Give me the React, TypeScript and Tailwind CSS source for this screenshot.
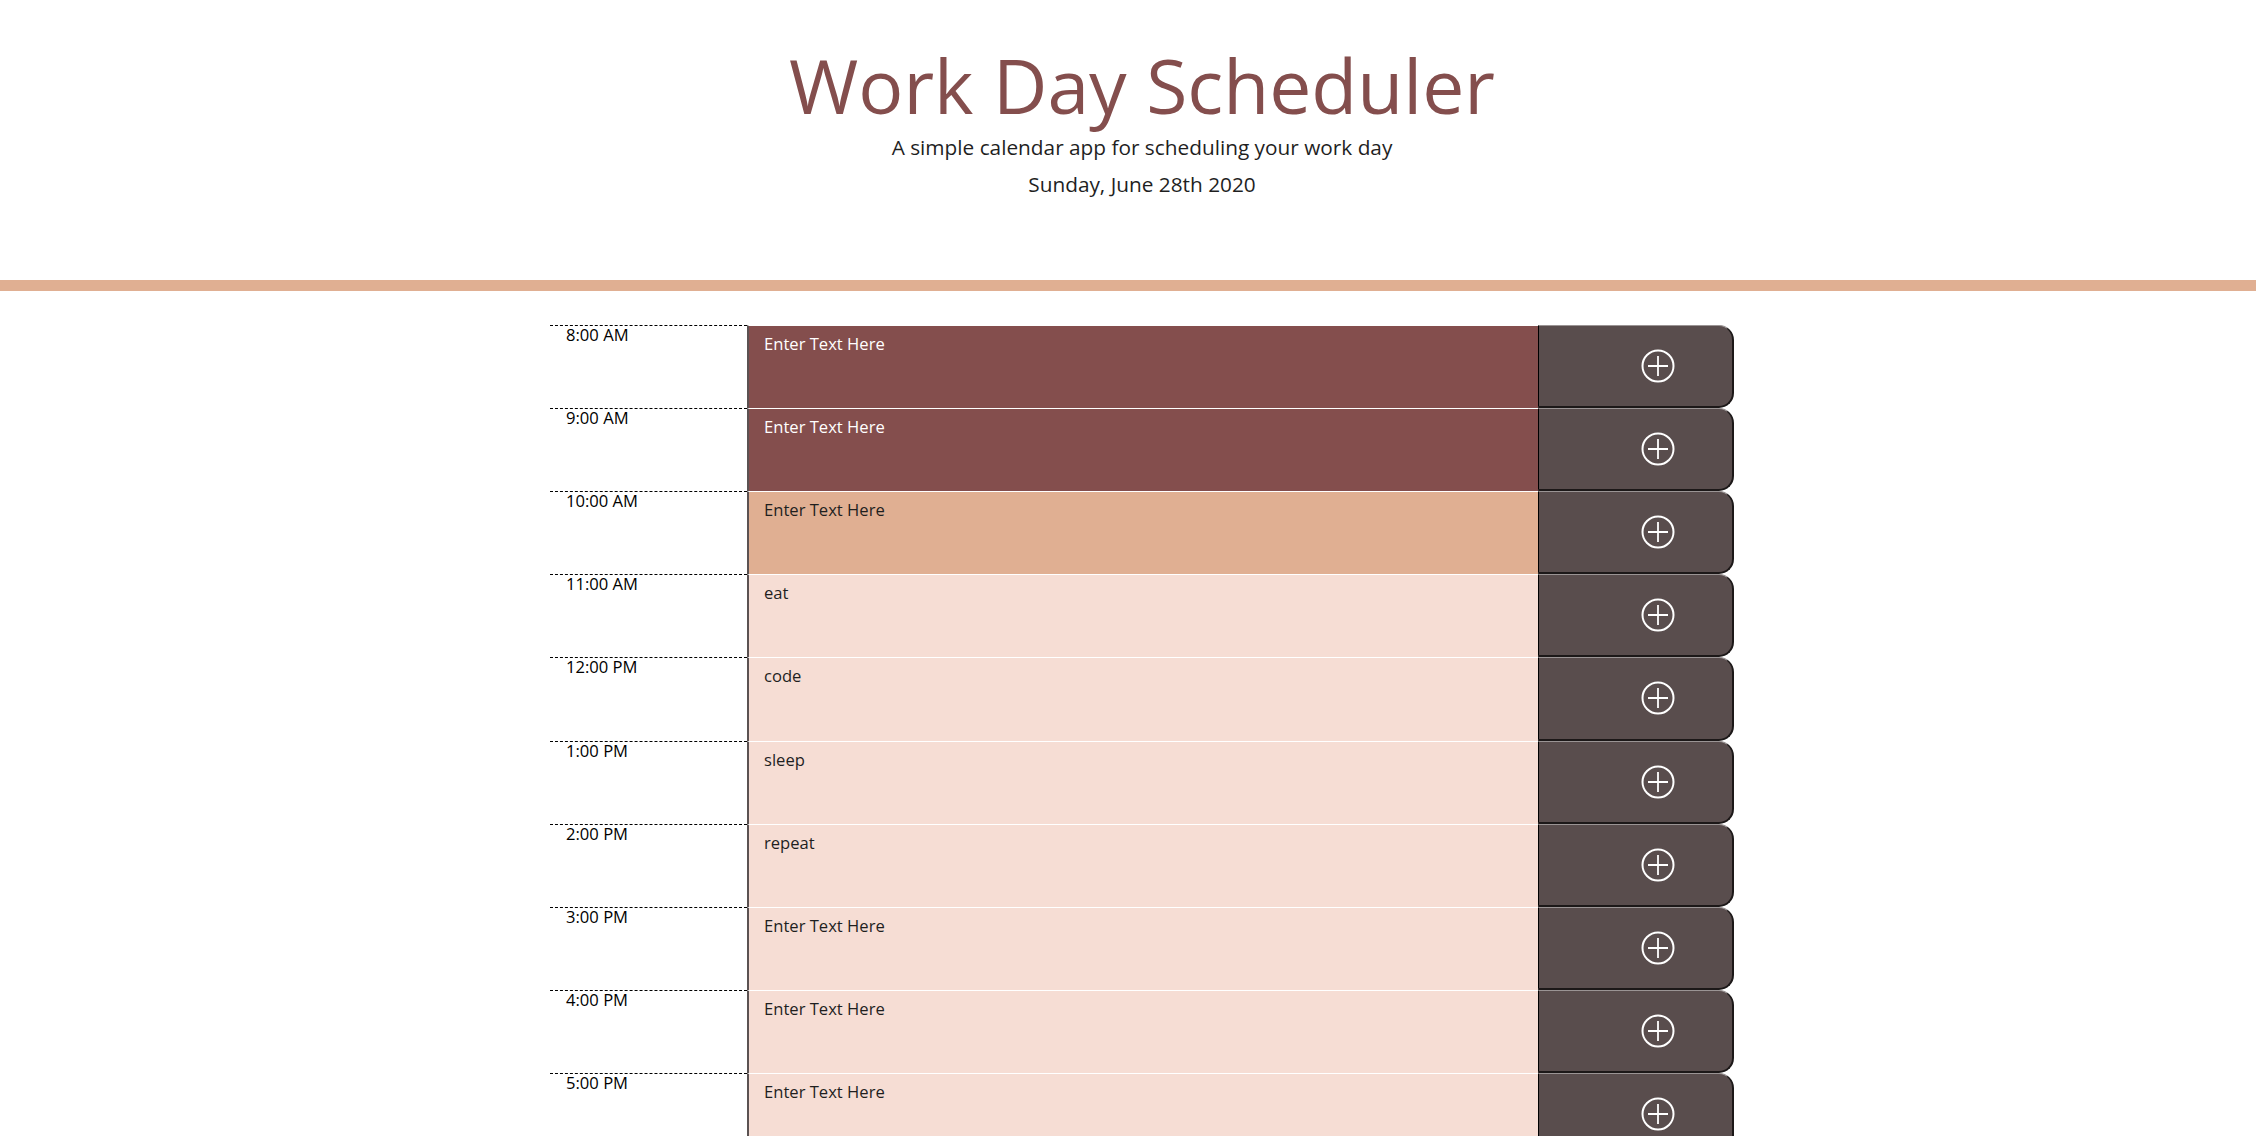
import { useState } from "react";

// 時間帯ごとの状態: past / present / future
type Slot = { hour: string; text: string; state: "past" | "present" | "future" };

const slots: Slot[] = [
  { hour: "8:00 AM", text: "", state: "past" },
  { hour: "9:00 AM", text: "", state: "past" },
  { hour: "10:00 AM", text: "", state: "present" },
  { hour: "11:00 AM", text: "eat", state: "future" },
  { hour: "12:00 PM", text: "code", state: "future" },
  { hour: "1:00 PM", text: "sleep", state: "future" },
  { hour: "2:00 PM", text: "repeat", state: "future" },
  { hour: "3:00 PM", text: "", state: "future" },
  { hour: "4:00 PM", text: "", state: "future" },
  { hour: "5:00 PM", text: "", state: "future" },
];

const stateClass = {
  past: "bg-[#844e4d] text-white placeholder:text-white",
  present: "bg-[#e0af92] text-[#1f1f1f] placeholder:text-[#1f1f1f]",
  future: "bg-[#f6ddd4] text-[#1f1f1f] placeholder:text-[#1f1f1f]",
};

function PlusCircle() {
  return (
    <svg width="34" height="34" viewBox="0 0 34 34" fill="none" stroke="white" strokeWidth="2">
      <circle cx="17" cy="17" r="15.5" />
      <path d="M17 7v20M7 17h20" strokeWidth="1.8" />
    </svg>
  );
}

function Row({ slot }: { slot: Slot }) {
  const [value, setValue] = useState(slot.text);
  return (
    <div className="flex h-[83.2px]">
      {/* 時刻 */}
      <div className="w-[197px] shrink-0 border-t border-dashed border-black pl-[16px] pt-[1px] text-[16.6px] leading-none text-black">
        {slot.hour}
      </div>
      {/* 入力欄 */}
      <textarea
        value={value}
        onChange={(e) => setValue(e.target.value)}
        placeholder="Enter Text Here"
        className={`w-[791px] shrink-0 resize-none border-t border-t-white border-l-2 border-l-[#5b5252] pl-[15px] pt-[10px] text-[16.6px] leading-none outline-none ${stateClass[slot.state]}`}
      />
      {/* 保存ボタン */}
      <button className="w-[196px] shrink-0 flex items-center pl-[102px] bg-[#594d4d] rounded-r-[15px] border-l border-l-black border-t border-t-[#9a9494] border-r-2 border-r-[#1c1818] border-b-2 border-b-[#1c1818]">
        <PlusCircle />
      </button>
    </div>
  );
}

export default function App() {
  return (
    <div className="min-h-screen bg-white font-['Open_Sans','Noto_Sans',sans-serif]">
      {/* ── ヘッダー ── */}
      <header className="text-center pl-[28px] pt-[48px] pb-[85px] border-b-[11px] border-[#e0af92]">
        <h1 className="text-[75px] leading-none font-normal text-[#844e4d]">Work Day Scheduler</h1>
        <p className="mt-[14px] text-[20.8px] leading-none text-[#1f1f1f]">
          A simple calendar app for scheduling your work day
        </p>
        <p className="mt-[16px] text-[20.8px] leading-none text-[#1f1f1f]">Sunday, June 28th 2020</p>
      </header>

      {/* ── タイムブロック ── */}
      <main className="ml-[550px] w-[1184px] pt-[34px] pb-[40px]">
        {slots.map((s) => (
          <Row key={s.hour} slot={s} />
        ))}
      </main>
    </div>
  );
}
